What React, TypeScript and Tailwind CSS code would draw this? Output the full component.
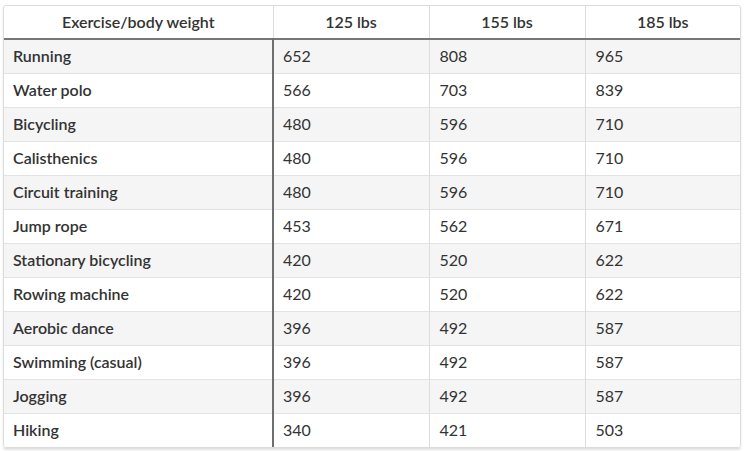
const rows: [string, number, number, number][] = [
  ["Running", 652, 808, 965],
  ["Water polo", 566, 703, 839],
  ["Bicycling", 480, 596, 710],
  ["Calisthenics", 480, 596, 710],
  ["Circuit training", 480, 596, 710],
  ["Jump rope", 453, 562, 671],
  ["Stationary bicycling", 420, 520, 622],
  ["Rowing machine", 420, 520, 622],
  ["Aerobic dance", 396, 492, 587],
  ["Swimming (casual)", 396, 492, 587],
  ["Jogging", 396, 492, 587],
  ["Hiking", 340, 421, 503],
];

const headers = ["125 lbs", "155 lbs", "185 lbs"];

export default function App() {
  return (
    <div className="min-h-[451px] w-[744px] bg-white pl-[3px] pt-[5px] font-['Lato',sans-serif] text-[16px] text-[#333]">
      <div className="w-[738px] overflow-hidden rounded-[3px] border border-[#dcdcdc] shadow-[0_2px_2px_rgba(0,0,0,0.12)]">
        <table className="w-full table-fixed border-collapse">
          <colgroup>
            <col className="w-[269px]" />
            <col className="w-[156px]" />
            <col className="w-[156px]" />
            <col />
          </colgroup>
          <thead>
            <tr className="h-[33px] border-b-2 border-[#777]">
              <th className="border-r border-[#dcdcdc] text-center font-semibold">Exercise/body weight</th>
              {headers.map((h, i) => (
                <th
                  key={h}
                  className={i < 2 ? "border-r border-[#dcdcdc] text-center font-semibold" : "text-center font-semibold"}
                >
                  {h}
                </th>
              ))}
            </tr>
          </thead>
          <tbody>
            {rows.map(([name, a, b, c], idx) => (
              <tr
                key={name}
                className={
                  idx % 2 === 0
                    ? "h-[34px] border-b border-[#e3e3e3] bg-[#f5f5f5] last:border-b-0"
                    : "h-[34px] border-b border-[#e3e3e3] bg-white last:border-b-0"
                }
              >
                <td className="border-r-2 border-[#6f6f6f] pl-[9px] font-semibold">{name}</td>
                <td className="border-r border-[#dcdcdc] pl-[9px]">{a}</td>
                <td className="border-r border-[#dcdcdc] pl-[10px]">{b}</td>
                <td className="pl-[10px]">{c}</td>
              </tr>
            ))}
          </tbody>
        </table>
      </div>
    </div>
  );
}
